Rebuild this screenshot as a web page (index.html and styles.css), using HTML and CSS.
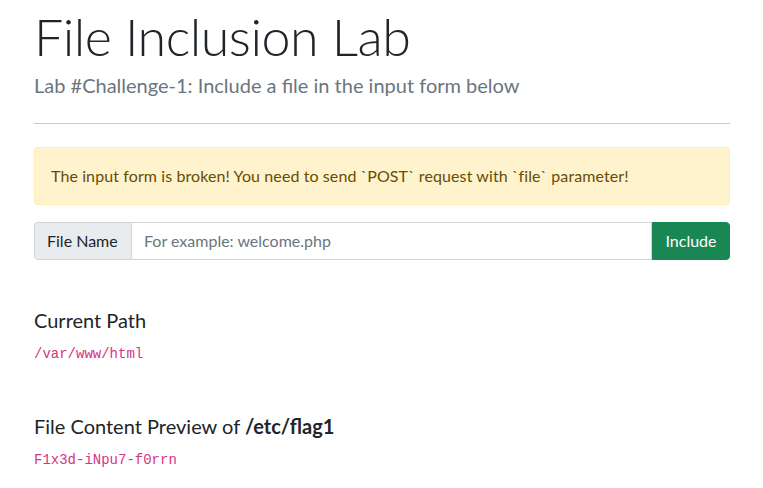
FILE: index.html
```html
<!DOCTYPE html>
<html lang="en">
<head>
<meta charset="utf-8">
<title>File Inclusion Lab</title>
<link rel="stylesheet" href="styles.css">
</head>
<body>
<div class="container">
  <h1 class="title">File Inclusion Lab</h1>
  <p class="lead">Lab #Challenge-1: Include a file in the input form below</p>
  <hr class="divider">
  <div class="alert">The input form is broken! You need to send `POST` request with `file` parameter!</div>
  <form class="input-group" method="post">
    <span class="addon">File Name</span>
    <input class="field" type="text" name="file" placeholder="For example: welcome.php">
    <button class="btn" type="submit">Include</button>
  </form>
  <section class="block first">
    <h5 class="block-title">Current Path</h5>
    <code class="code">/var/www/html</code>
  </section>
  <section class="block">
    <h5 class="block-title">File Content Preview of <b>/etc/flag1</b></h5>
    <code class="code">F1x3d-iNpu7-f0rrn</code>
  </section>
</div>
</body>
</html>
```
FILE: styles.css
```css
* { box-sizing: border-box; }
html, body { margin: 0; background: #fff; }
body {
  font-family: "Lato", "Open Sans", sans-serif;
  font-size: 16px;
  line-height: 1.5;
  color: #212529;
}
.container { padding: 0 33px 0 34px; }
.title {
  margin: 0;
  padding-top: 5px;
  font-size: 52px;
  font-weight: 300;
  line-height: 1.2;
  letter-spacing: -0.5px;
}
.lead {
  margin: 3px 0 0;
  font-size: 20px;
  font-weight: 400;
  color: #6c757d;
  line-height: 1.5;
}
.divider {
  margin: 23px 0 23px;
  border: 0;
  border-top: 1px solid #c8c9ca;
}
.alert {
  background: #fff3cd;
  border: 1px solid #ffecb5;
  color: #664d03;
  border-radius: 4px;
  padding: 16px;
  height: 58px;
  line-height: 24px;
  letter-spacing: 0.1px;
}
.input-group {
  display: flex;
  margin-top: 17px;
  height: 38px;
}
.addon {
  display: flex;
  align-items: center;
  padding: 0 12px;
  background: #e9ecef;
  border: 1px solid #ced4da;
  border-radius: 4px 0 0 4px;
  color: #212529;
  width: 98px;
}
.field {
  flex: 1;
  min-width: 0;
  border: 1px solid #ced4da;
  border-left: 0;
  padding: 0 12px;
  font: inherit;
  color: #212529;
  outline: none;
}
.field::placeholder { color: #6c757d; }
.btn {
  border: 1px solid #198754;
  background: #198754;
  color: #fff;
  font: inherit;
  padding: 0 12px;
  width: 78px;
  border-radius: 0 4px 4px 0;
}
.block { margin-top: 49px; }
.block.first { margin-top: 48px; }
.block-title {
  margin: 0 0 12px;
  font-size: 20px;
  font-weight: 400;
  line-height: 1.2;
}
.block-title b { font-weight: 700; }
.code {
  display: block;
  font-family: "Liberation Mono", monospace;
  font-size: 14px;
  color: #d63384;
  line-height: 21px;
}
```
